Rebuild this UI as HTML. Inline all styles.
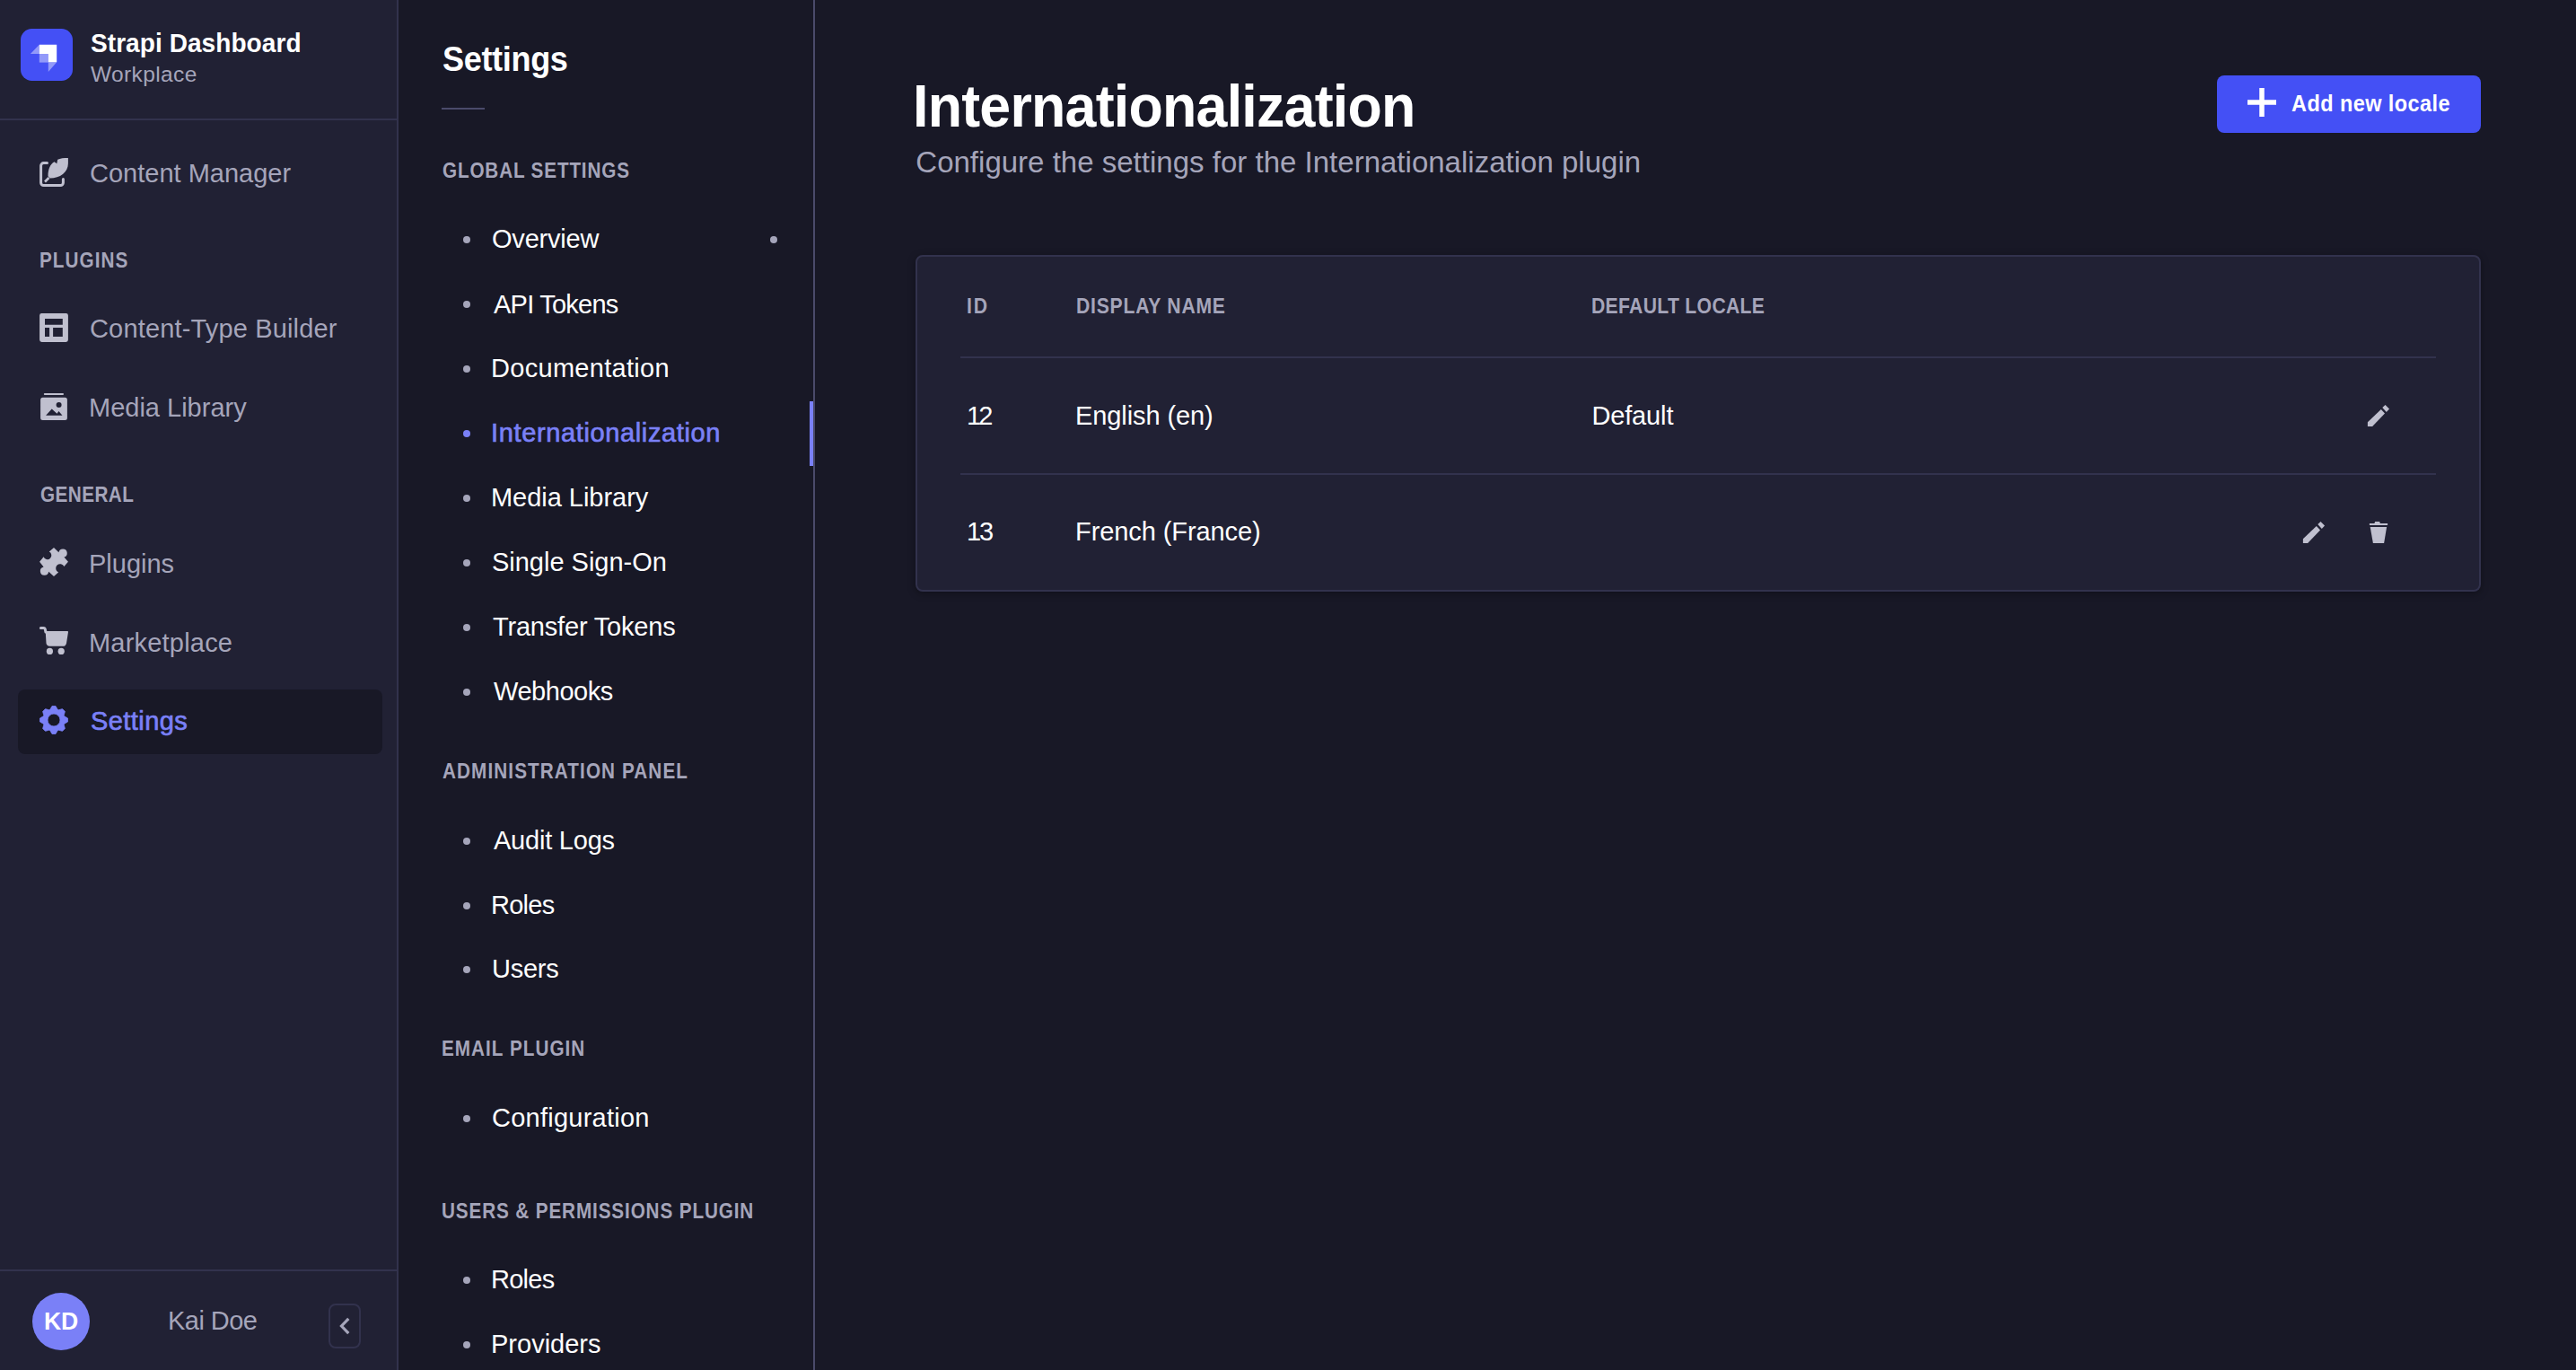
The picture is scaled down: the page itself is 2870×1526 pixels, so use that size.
<!DOCTYPE html>
<html><head><meta charset="utf-8"><style>
*{margin:0;padding:0;box-sizing:border-box}
html,body{width:2870px;height:1526px;overflow:hidden;background:#181826;font-family:"Liberation Sans",sans-serif}
.a{position:absolute;display:block}
.t{position:absolute;line-height:1;white-space:nowrap}
.dot{width:8px;height:8px;border-radius:50%}
</style></head><body>
<div class="a" style="left:0;top:0;width:442px;height:1526px;background:#212134"></div>
<div class="a" style="left:442px;top:0;width:2px;height:1526px;background:#32324d"></div>
<div class="a" style="left:0;top:132px;width:442px;height:2px;background:#32324d"></div>
<div class="a" style="left:0;top:1414px;width:442px;height:2px;background:#32324d"></div>
<div class="a" style="left:20px;top:768px;width:406px;height:72px;border-radius:8px;background:#181826"></div>
<div class="a" style="left:906px;top:0;width:2px;height:1526px;background:#4a4a6a"></div>
<div class="a" style="left:492px;top:120px;width:48px;height:2px;background:#4a4a6a"></div>
<div class="a" style="left:902px;top:447px;width:4px;height:72px;background:#7a80f7"></div>
<div class="a dot" style="left:858px;top:263px;width:8px;height:8px;background:#a5a5ba"></div>
<div class="a" style="left:36px;top:1440px;width:64px;height:64px;border-radius:50%;background:#7a80f7"></div>
<div class="a" style="left:366px;top:1452px;width:36px;height:50px;border-radius:8px;border:2px solid #32324d"></div>
<div class="a" style="left:2470px;top:84px;width:294px;height:64px;border-radius:8px;background:#4450f5"></div>
<div class="a" style="left:1020px;top:284px;width:1744px;height:375px;border-radius:8px;background:#212134;border:2px solid #32324d;box-shadow:0 2px 8px rgba(3,3,5,0.35)"></div>
<div class="a" style="left:1070px;top:397px;width:1644px;height:2px;background:#32324d"></div>
<div class="a" style="left:1070px;top:527px;width:1644px;height:2px;background:#32324d"></div>
<svg class="a" style="left:23px;top:32px" width="58" height="58" viewBox="0 0 58 58">
<rect x="0" y="0" width="58" height="58" rx="12.5" fill="#4450f5"/>
<path d="M20.8,17.8 H40.2 V37.3 H30.8 V28 H20.8 Z" fill="#ffffff"/>
<path d="M20.8,17.8 V28 H10.9 Z" fill="#ffffff" fill-opacity="0.42"/>
<path d="M20.8,28 H30.8 V37.6 H20.8 Z" fill="#ffffff" fill-opacity="0.42"/>
<path d="M30.8,37.3 H40.2 L30.8,47.9 Z" fill="#ffffff" fill-opacity="0.42"/>
</svg>
<svg class="a" style="left:36px;top:168px" width="48" height="48" viewBox="0 0 48 48">
<path d="M16.5,13.6 H12.6 A3,3 0 0 0 9.6,16.6 V35.5 A3,3 0 0 0 12.6,38.5 H31.4 A3,3 0 0 0 34.4,35.5 V31.5" fill="none" stroke="#c0c0cf" stroke-width="3" stroke-linecap="round"/>
<path d="M39.9,8 L39.9,14 C39.9,24 31,30.5 19.6,30.5 L17.5,28.3 C17.5,20 20,15 24.5,12.3 L27.3,14.2 L28.2,9.8 C31,8.4 35,8 39.9,8 Z" fill="#c0c0cf"/>
<path d="M18.5,30 L14,34.5" stroke="#c0c0cf" stroke-width="2.6"/>
</svg><svg class="a" style="left:36px;top:340px" width="48" height="48" viewBox="0 0 48 48">
<path fill-rule="evenodd" fill="#c0c0cf" d="M10.5,8.9 H37.5 A2.4,2.4 0 0 1 39.9,11.3 V38.6 A2.4,2.4 0 0 1 37.5,41 H10.5 A2.4,2.4 0 0 1 8.1,38.6 V11.3 A2.4,2.4 0 0 1 10.5,8.9 Z M14,15.1 V21.7 H33.8 V15.1 Z M14,25.05 V34.9 H19.1 V25.05 Z M23.1,25.05 V34.9 H33.8 V25.05 Z"/>
</svg><svg class="a" style="left:36px;top:428px" width="48" height="48" viewBox="0 0 48 48">
<rect x="12.8" y="10" width="22.2" height="2.1" rx="1" fill="#c0c0cf"/>
<path fill-rule="evenodd" fill="#c0c0cf" d="M11.6,14.7 H36.4 A2.5,2.5 0 0 1 38.9,17.2 V37.4 A2.5,2.5 0 0 1 36.4,39.9 H11.6 A2.5,2.5 0 0 1 9.1,37.4 V17.2 A2.5,2.5 0 0 1 11.6,14.7 Z M15.1,34.7 L21.7,27.5 L27.5,32.8 L29.4,30.1 L33.5,34.7 Z M29.6,20 A3,3 0 1 0 29.6,26 A3,3 0 1 0 29.6,20 Z"/>
</svg><svg class="a" style="left:36px;top:602px" width="48" height="48" viewBox="0 0 48 48">
<path fill="#c0c0cf" d="M24,8.06 L29.43,13.3 A4.7,4.7 0 1 1 35.4,18.6 L39.95,23.8 L35.4,29.1 A4.8,4.8 0 1 0 29.1,35.4 L24,39.95 L18.2,34.7 A4.7,4.7 0 1 1 12.6,29.4 L8.06,23.8 L12.6,18.2 A4.5,4.5 0 1 0 18.75,12.6 Z"/>
</svg><svg class="a" style="left:36px;top:690px" width="48" height="48" viewBox="0 0 48 48">
<path d="M9.4,9.5 H12.6 C13.6,9.5 14.2,10.2 14.4,11.2 L14.9,14" fill="none" stroke="#c0c0cf" stroke-width="3" stroke-linecap="round"/>
<path fill="#c0c0cf" d="M14.7,13.1 H39.2 A0.9,0.9 0 0 1 40,14.1 L38,26.4 C37.7,28.4 36.2,29.8 34.2,29.8 H19.2 C17.2,29.8 15.8,28.4 15.5,26.5 Z"/>
<circle cx="19.4" cy="35.4" r="3.6" fill="#c0c0cf"/><circle cx="32.2" cy="35.4" r="3.6" fill="#c0c0cf"/>
</svg><svg class="a" style="left:36px;top:778px" width="48" height="48" viewBox="0 0 48 48">
<path fill-rule="evenodd" fill="#7a80f7" stroke="#7a80f7" stroke-width="0.8" stroke-linejoin="round" d="M19.86,12.31 L21.98,8.53 L26.02,8.53 L28.14,12.31 L29.34,12.81 L33.51,11.63 L36.37,14.49 L35.19,18.66 L35.69,19.86 L39.47,21.98 L39.47,26.02 L35.69,28.14 L35.19,29.34 L36.37,33.51 L33.51,36.37 L29.34,35.19 L28.14,35.69 L26.02,39.47 L21.98,39.47 L19.86,35.69 L18.66,35.19 L14.49,36.37 L11.63,33.51 L12.81,29.34 L12.31,28.14 L8.53,26.02 L8.53,21.98 L12.31,19.86 L12.81,18.66 L11.63,14.49 L14.49,11.63 L18.66,12.81 Z M24,17 A7,7 0 1 0 24,31 A7,7 0 1 0 24,17 Z"/>
</svg>
<svg class="a" style="left:2504px;top:98px" width="32" height="32" viewBox="0 0 32 32">
<path d="M16,0 V32 M0,16 H32" stroke="#ffffff" stroke-width="5.5"/>
</svg>
<svg class="a" style="left:366px;top:1452px" width="36" height="49" viewBox="0 0 36 49">
<path d="M22.3,16.9 L14.5,25 L22.3,33.1" fill="none" stroke="#a5a5ba" stroke-width="3.2"/>
</svg>
<svg class="a" style="left:2636px;top:450px" width="28" height="28" viewBox="0 0 28 28">
<path fill="#c0c0cf" d="M1.9,20.3 L16.8,6.1 L21,10.4 L7.1,25 H1.9 Z"/>
<path fill="#c0c0cf" d="M18.3,3.9 L21.5,1 L26,5.4 L22.8,8.9 Z"/>
</svg>
<svg class="a" style="left:2564px;top:580px" width="28" height="28" viewBox="0 0 28 28">
<path fill="#c0c0cf" d="M1.9,20.3 L16.8,6.1 L21,10.4 L7.1,25 H1.9 Z"/>
<path fill="#c0c0cf" d="M18.3,3.9 L21.5,1 L26,5.4 L22.8,8.9 Z"/>
</svg>
<svg class="a" style="left:2636px;top:580px" width="28" height="28" viewBox="0 0 28 28">
<path fill="#c0c0cf" d="M3.9,2.9 H9.4 L10.2,1 H15.1 L15.9,2.9 H24.1 V5.1 H3.9 Z"/>
<path fill="#c0c0cf" d="M4.7,6.9 H23.1 L20.1,25 H7.9 Z"/>
</svg>
<div class="a dot" style="left:516px;top:263.00px;background:#a5a5ba"></div><div class="a dot" style="left:516px;top:335.25px;background:#a5a5ba"></div><div class="a dot" style="left:516px;top:407.00px;background:#a5a5ba"></div><div class="a dot" style="left:516px;top:478.70px;background:#7a80f7"></div><div class="a dot" style="left:516px;top:551.00px;background:#a5a5ba"></div><div class="a dot" style="left:516px;top:623.00px;background:#a5a5ba"></div><div class="a dot" style="left:516px;top:695.00px;background:#a5a5ba"></div><div class="a dot" style="left:516px;top:767.00px;background:#a5a5ba"></div><div class="a dot" style="left:516px;top:932.50px;background:#a5a5ba"></div><div class="a dot" style="left:516px;top:1004.50px;background:#a5a5ba"></div><div class="a dot" style="left:516px;top:1076.00px;background:#a5a5ba"></div><div class="a dot" style="left:516px;top:1241.50px;background:#a5a5ba"></div><div class="a dot" style="left:516px;top:1421.50px;background:#a5a5ba"></div><div class="a dot" style="left:516px;top:1494.00px;background:#a5a5ba"></div>
<div class="t" style="left:101.00px;top:33.02px;font-size:29.5px;transform:scaleX(0.95);transform-origin:0 0;font-weight:700;color:#ffffff;letter-spacing:0.067px">Strapi Dashboard</div><div class="t" style="left:101.00px;top:71.26px;font-size:24.5px;color:#a5a5ba;letter-spacing:0.375px">Workplace</div><div class="t" style="left:100.00px;top:179.20px;font-size:29px;color:#a5a5ba;letter-spacing:0.000px">Content Manager</div><div class="t" style="left:44.00px;top:278.78px;font-size:23px;transform:scaleX(0.9);transform-origin:0 0;font-weight:700;color:#a5a5ba;letter-spacing:1.167px">PLUGINS</div><div class="t" style="left:100.00px;top:352.45px;font-size:29px;color:#a5a5ba;letter-spacing:0.158px">Content-Type Builder</div><div class="t" style="left:99.00px;top:440.45px;font-size:29px;color:#a5a5ba;letter-spacing:0.000px">Media Library</div><div class="t" style="left:44.50px;top:540.03px;font-size:23px;transform:scaleX(0.9);transform-origin:0 0;font-weight:700;color:#a5a5ba;letter-spacing:0.500px">GENERAL</div><div class="t" style="left:99.00px;top:613.70px;font-size:29px;color:#a5a5ba;letter-spacing:0.000px">Plugins</div><div class="t" style="left:99.00px;top:701.95px;font-size:29px;color:#a5a5ba;letter-spacing:0.200px">Marketplace</div><div class="t" style="left:101.00px;top:788.70px;font-size:29px;-webkit-text-stroke:0.7px #7a80f7;color:#7a80f7;letter-spacing:0.429px">Settings</div><div class="t" style="left:187.00px;top:1457.45px;font-size:29px;color:#a5a5ba;letter-spacing:-0.533px">Kai Doe</div><div class="t" style="left:49.20px;top:1458.29px;font-size:28px;transform:scaleX(0.95);transform-origin:0 0;font-weight:700;color:#ffffff;letter-spacing:-0.200px">KD</div><div class="t" style="left:493.00px;top:46.73px;font-size:38px;transform:scaleX(0.95);transform-origin:0 0;font-weight:700;color:#ffffff;letter-spacing:-0.371px">Settings</div><div class="t" style="left:492.50px;top:178.53px;font-size:23px;transform:scaleX(0.9);transform-origin:0 0;font-weight:700;color:#a5a5ba;letter-spacing:0.929px">GLOBAL SETTINGS</div><div class="t" style="left:548.00px;top:252.45px;font-size:29px;color:#ffffff;letter-spacing:-0.200px">Overview</div><div class="t" style="left:550.00px;top:324.70px;font-size:29px;color:#ffffff;letter-spacing:-0.756px">API Tokens</div><div class="t" style="left:547.00px;top:396.45px;font-size:29px;color:#ffffff;letter-spacing:0.300px">Documentation</div><div class="t" style="left:547.00px;top:468.15px;font-size:29px;-webkit-text-stroke:0.7px #7a80f7;color:#7a80f7;letter-spacing:0.632px">Internationalization</div><div class="t" style="left:547.00px;top:540.45px;font-size:29px;color:#ffffff;letter-spacing:-0.033px">Media Library</div><div class="t" style="left:548.00px;top:612.45px;font-size:29px;color:#ffffff;letter-spacing:-0.015px">Single Sign-On</div><div class="t" style="left:549.00px;top:684.45px;font-size:29px;color:#ffffff;letter-spacing:-0.186px">Transfer Tokens</div><div class="t" style="left:550.00px;top:756.45px;font-size:29px;color:#ffffff;letter-spacing:-0.457px">Webhooks</div><div class="t" style="left:492.75px;top:847.53px;font-size:23px;transform:scaleX(0.9);transform-origin:0 0;font-weight:700;color:#a5a5ba;letter-spacing:1.211px">ADMINISTRATION PANEL</div><div class="t" style="left:550.00px;top:921.95px;font-size:29px;color:#ffffff;letter-spacing:-0.222px">Audit Logs</div><div class="t" style="left:547.00px;top:993.95px;font-size:29px;color:#ffffff;letter-spacing:-0.750px">Roles</div><div class="t" style="left:548.00px;top:1065.45px;font-size:29px;color:#ffffff;letter-spacing:-0.250px">Users</div><div class="t" style="left:492.00px;top:1156.53px;font-size:23px;transform:scaleX(0.9);transform-origin:0 0;font-weight:700;color:#a5a5ba;letter-spacing:1.145px">EMAIL PLUGIN</div><div class="t" style="left:548.00px;top:1230.95px;font-size:29px;color:#ffffff;letter-spacing:0.250px">Configuration</div><div class="t" style="left:492.00px;top:1337.78px;font-size:23px;transform:scaleX(0.9);transform-origin:0 0;font-weight:700;color:#a5a5ba;letter-spacing:0.968px">USERS &amp; PERMISSIONS PLUGIN</div><div class="t" style="left:547.00px;top:1410.95px;font-size:29px;color:#ffffff;letter-spacing:-0.750px">Roles</div><div class="t" style="left:547.00px;top:1483.45px;font-size:29px;color:#ffffff;letter-spacing:0.000px">Providers</div><div class="t" style="left:1017.30px;top:84.52px;font-size:66px;transform:scaleX(0.95);transform-origin:0 0;font-weight:700;color:#ffffff;letter-spacing:-0.800px">Internationalization</div><div class="t" style="left:1020.30px;top:164.06px;font-size:33px;color:#a5a5ba;letter-spacing:0.011px">Configure the settings for the Internationalization plugin</div><div class="t" style="left:2553.00px;top:102.61px;font-size:25.5px;transform:scaleX(0.92);transform-origin:0 0;font-weight:700;color:#ffffff;letter-spacing:0.477px">Add new locale</div><div class="t" style="left:1077.40px;top:329.60px;font-size:23.5px;transform:scaleX(0.9);transform-origin:0 0;font-weight:700;color:#a5a5ba;letter-spacing:2.000px">ID</div><div class="t" style="left:1198.80px;top:329.60px;font-size:23.5px;transform:scaleX(0.9);transform-origin:0 0;font-weight:700;color:#a5a5ba;letter-spacing:0.855px">DISPLAY NAME</div><div class="t" style="left:1773.40px;top:329.60px;font-size:23.5px;transform:scaleX(0.9);transform-origin:0 0;font-weight:700;color:#a5a5ba;letter-spacing:0.354px">DEFAULT LOCALE</div><div class="t" style="left:1077.00px;top:448.65px;font-size:29px;color:#ffffff;letter-spacing:-2.800px">12</div><div class="t" style="left:1198.00px;top:448.65px;font-size:29px;color:#ffffff;letter-spacing:-0.091px">English (en)</div><div class="t" style="left:1773.40px;top:448.65px;font-size:29px;color:#ffffff;letter-spacing:-0.133px">Default</div><div class="t" style="left:1077.00px;top:578.45px;font-size:29px;color:#ffffff;letter-spacing:-2.200px">13</div><div class="t" style="left:1198.00px;top:578.45px;font-size:29px;color:#ffffff;letter-spacing:-0.086px">French (France)</div>
</body></html>
